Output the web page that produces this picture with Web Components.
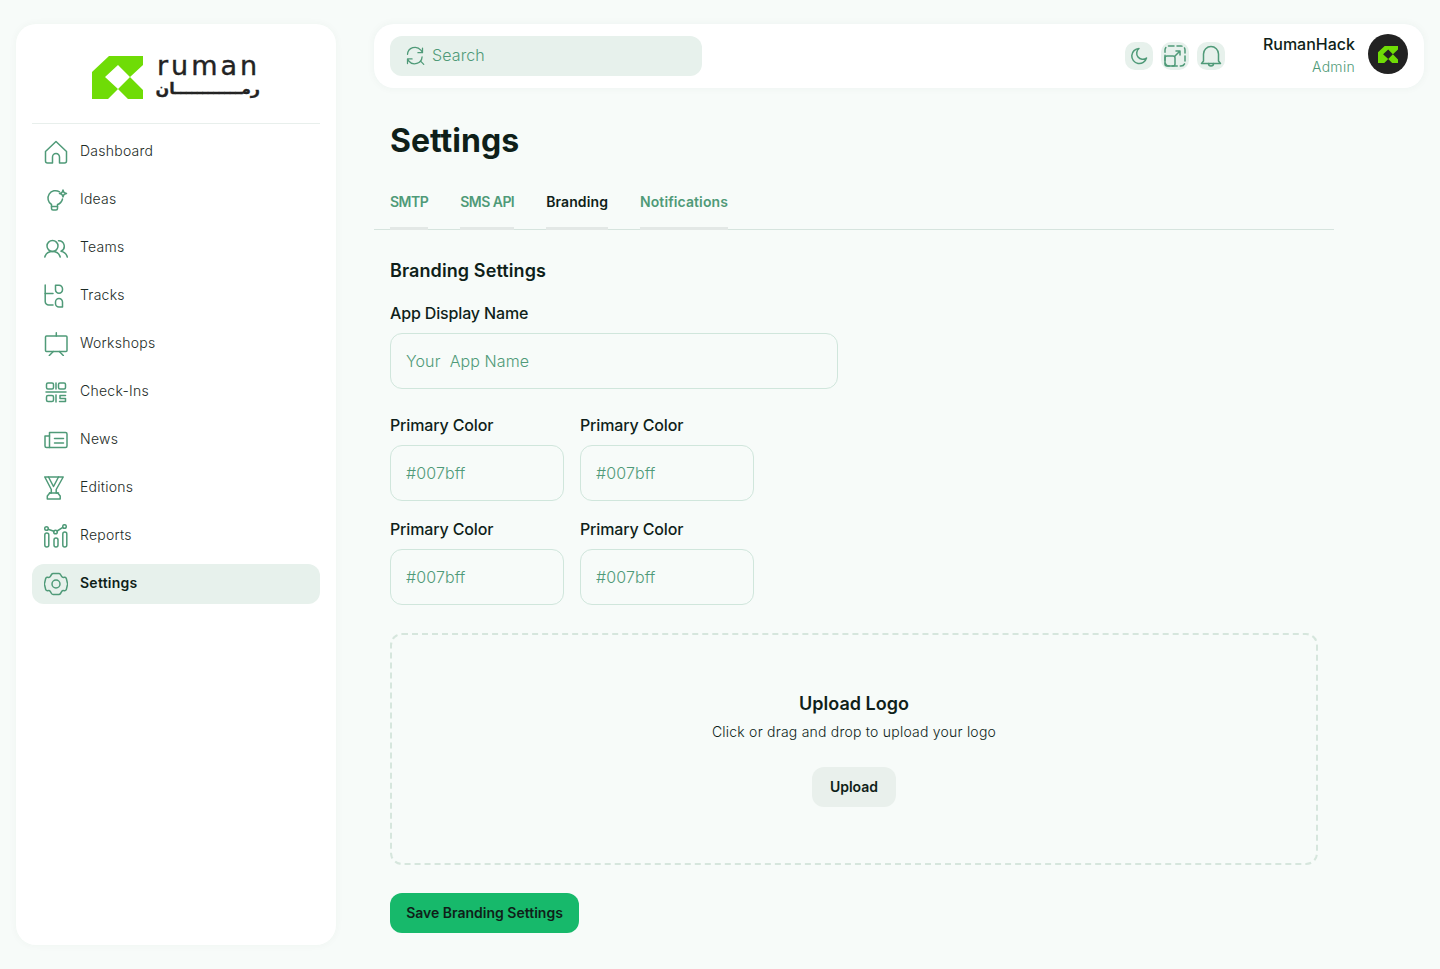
<!DOCTYPE html>
<html lang="en">
<head>
<meta charset="utf-8">
<title>Settings</title>
<style>
  html, body { margin: 0; height: 100%; }
  body { background: #f7fbf9; font-family: Inter, "Noto Sans", sans-serif; color: #0f1f19; }
</style>
</head>
<body>
<app-shell>
  <side-bar slot="side">
    <nav-item icon="home">Dashboard</nav-item>
    <nav-item icon="idea">Ideas</nav-item>
    <nav-item icon="teams">Teams</nav-item>
    <nav-item icon="tracks">Tracks</nav-item>
    <nav-item icon="board">Workshops</nav-item>
    <nav-item icon="qr">Check-Ins</nav-item>
    <nav-item icon="news">News</nav-item>
    <nav-item icon="cup">Editions</nav-item>
    <nav-item icon="chart">Reports</nav-item>
    <nav-item icon="gear" active>Settings</nav-item>
  </side-bar>
  <top-bar slot="top"></top-bar>
  <settings-page></settings-page>
</app-shell>

<script>
// iconos de la barra lateral y de la barra superior, todos en viewBox de 24
const ICONS = {
  home: '<path d="M1.500 11.500 12 1.500l10.500 10v9.500a2 2 0 0 1-2 2h-5v-6a3.500 3.500 0 0 0-7 0v6h-5a2 2 0 0 1-2-2z"/>',
  idea: '<g transform="translate(2.500 .5)"><path d="M13 3.300A7.500 7.500 0 1 0 5 16V20a1.500 1.500 0 0 0 1.500 1.500h3a1.500 1.500 0 0 0 1.500-1.500v-4A7.500 7.500 0 0 0 16 10.500"/><path d="M5 18h6"/><path d="M16.500 1.500c.3 2.500 1 3.200 3.500 3.500-2.500.3-3.200 1-3.500 3.500-.3-2.500-1-3.200-3.500-3.500 2.500-.3 3.200-1 3.500-3.500z"/></g>',
  teams: '<circle cx="8.500" cy="10" r="5.500"/><path d="M.8 21c1-3.500 4-5.500 7.700-5.500s6.700 2 7.700 5.500"/><path d="M14.500 4.700a5.500 5.500 0 0 1 2.500 10.500c3 .6 5.500 2.700 6.300 5.800"/>',
  tracks: '<path d="M1.200 1v16.500a3.500 3.500 0 0 0 3.500 3.500H9"/><path d="M1.200 9.500H9"/><path d="M11.500 1.200h3.500a3.500 3.500 0 0 1 3.500 3.500v1a3.500 3.500 0 0 1-3.500 3.500 3.500 3.500 0 0 1-3.500-3.500z"/><path d="M15 14.500a3.500 3.500 0 0 1 3.500 3.500v5h-3.500a3.500 3.500 0 0 1-3.500-3.500V18a3.500 3.500 0 0 1 3.500-3.500z"/>',
  board: '<rect x="1.500" y="4" width="21.500" height="15.500" rx="1"/><path d="M12.300 .8v3.200M9.300 19.500l-4 4M15.300 19.500l4 4"/>',
  qr: '<rect x="2.500" y="3" width="7" height="6" rx="1.500"/><rect x="14.500" y="3" width="7" height="6" rx="1.500"/><path d="M12 3v6"/><path d="M2 12h20"/><rect x="2.500" y="15.500" width="7" height="6" rx="1.500"/><path d="M12 15v7"/><path d="M21.500 15.500h-5.500v3h5.500v3h-6"/>',
  news: '<path d="M5.500 4.500H21.500a1.500 1.500 0 0 1 1.500 1.500v12a1.500 1.500 0 0 1-1.500 1.500H2.500A1.500 1.500 0 0 1 1 18V8h4.500z"/><path d="M5.500 8v11.500"/><path d="M10.500 10.500h9M10.500 15h9"/>',
  cup: '<path d="M.8 1h18.400l-7 12.500v3.500h1.500l2.500 3v3H3.300v-3l2.500-3h1.500v-3.500z"/><path d="M4.500 1l5 9.500 5-9.500"/><path d="M5.500 17h9"/>',
  chart: '<rect x=".8" y="9" width="4" height="14" rx="2"/><rect x="10" y="14" width="4" height="9" rx="2"/><rect x="18.800" y="8" width="4" height="15" rx="2"/><circle cx="2.500" cy="4.500" r="1.800"/><circle cx="11.500" cy="8" r="1.800"/><circle cx="20.500" cy="2.500" r="1.800"/><path d="M4.200 5.200l5.600 2.100M13.200 7l5.600-3.600"/>',
  gear: '<circle cx="12" cy="12" r="4"/><path d="M9.200 1.500H14.800a2 2 0 0 1 1.700 1L17.600 4.400a2 2 0 0 0 1.800 1L20.400 5.300a2 2 0 0 1 1.900 1L23.400 11a2 2 0 0 1 0 2L22.300 17.700a2 2 0 0 1-1.900 1L19.400 18.600a2 2 0 0 0-1.800 1L16.500 21.500a2 2 0 0 1-1.700 1H9.200a2 2 0 0 1-1.700-1L6.400 19.600a2 2 0 0 0-1.800-1L3.600 18.700a2 2 0 0 1-1.900-1L.6 13a2 2 0 0 1 0-2L1.700 6.300a2 2 0 0 1 1.900-1L4.600 5.400a2 2 0 0 0 1.800-1L7.500 2.500a2 2 0 0 1 1.700-1z"/>',
  search: '<path d="M3 10a9 9 0 0 1 16-5l2 2.500M21 2.500V8h-5.500"/><path d="M20.500 13a9 9 0 0 1-16 5L3 15.500M3 21v-5.500h5.500"/><path d="M19 18.500l3.500 3.500"/>',
  moon: '<path d="M12 4.500a7.500 7.500 0 1 0 7.500 9.500 6 6 0 0 1-7.500-9.500z"/>',
  expand: '<rect x="2" y="2" width="20" height="20" rx="4" stroke-dasharray="5 3"/><rect x="2" y="12" width="10" height="10" rx="2"/><path d="M12 12l5-5M13 7h4v4"/>',
  bell: '<path d="M4.500 17V10a7.500 7.500 0 0 1 15 0v7l2 2.500H2.500z"/><path d="M9.500 19.500a2.500 2.500 0 0 0 5 0"/>'
};

function icon(name, size) {
  return `<svg width="${size}" height="${size}" viewBox="0 0 24 24" fill="none" stroke="currentColor" stroke-width="1.500" stroke-linecap="round" stroke-linejoin="round">${ICONS[name]}</svg>`;
}

// marca del logo, se usa en la barra lateral y en el avatar
const MARK = '<path fill="#6fdc06" fill-rule="evenodd" d="M0 16 17 0H51V9L38 21 51 34V43H36L26 33 16 43H0ZM13 21 26 9 38 21 26 33Z"/>';

class AppShell extends HTMLElement {
  constructor() {
    super();
    this.attachShadow({ mode: 'open' });
    this.shadowRoot.innerHTML = `
    <style>
      :host { display: grid; grid-template-columns: 320px 1050px; column-gap: 38px; padding: 24px 16px; height: 969px; box-sizing: border-box; }
      .main { display: flex; flex-direction: column; min-width: 0; }
    </style>
    <slot name="side"></slot>
    <div class="main">
      <slot name="top"></slot>
      <slot></slot>
    </div>`;
  }
}

class SideBar extends HTMLElement {
  constructor() {
    super();
    this.attachShadow({ mode: 'open' });
    this.shadowRoot.innerHTML = `
    <style>
      :host { display: block; background: #fff; border-radius: 20px; padding: 0 16px; box-shadow: 0 0 8px rgba(30,80,60,.04); }
      .logo { height: 100px; box-sizing: border-box; border-bottom: 1px solid #e8efec; display: flex; align-items: center; justify-content: center; gap: 14px; padding-top: 7px; }
      .words { display: flex; flex-direction: column; width: 103px; color: #232323; }
      .en { font: 400 27px/20px "DejaVu Sans", sans-serif; letter-spacing: 3px; height: 21px; white-space: nowrap; -webkit-text-stroke: .4px #232323; }
      .ar { font: 700 16px/20px "DejaVu Sans", sans-serif; height: 20px; margin-top: 2px; text-align: center; white-space: nowrap; -webkit-text-stroke: .3px #232323; }
      nav { display: flex; flex-direction: column; gap: 8px; padding-top: 8px; }
    </style>
    <div class="logo">
      <svg width="51" height="43" viewBox="0 0 51 43">${MARK}</svg>
      <div class="words"><span class="en">ruman</span><span class="ar" dir="rtl">رمــــــــــــان</span></div>
    </div>
    <nav><slot></slot></nav>`;
  }
}

class NavItem extends HTMLElement {
  constructor() {
    super();
    this.attachShadow({ mode: 'open' });
  }
  connectedCallback() {
    this.shadowRoot.innerHTML = `
    <style>
      :host { display: flex; align-items: center; gap: 12px; height: 40px; padding: 0 12px; border-radius: 12px; font-size: 14px; font-weight: 300; letter-spacing: .25px; color: #1c2b26; }
      :host([active]) { background: #e7f1ec; font-weight: 600; color: #0f1f19; }
      svg { color: #4f9a78; flex: none; }
      span { margin-bottom: 3px; }
    </style>
    ${icon(this.getAttribute('icon'), 24)}<span><slot></slot></span>`;
  }
}

class IconButton extends HTMLElement {
  constructor() {
    super();
    this.attachShadow({ mode: 'open' });
  }
  connectedCallback() {
    this.shadowRoot.innerHTML = `
    <style>
      :host { display: flex; align-items: center; justify-content: center; width: 28px; height: 28px; border-radius: 10px; background: #e7f1ec; color: #4f9a78; }
    </style>
    ${icon(this.getAttribute('icon'), 24)}`;
  }
}

class TopBar extends HTMLElement {
  constructor() {
    super();
    this.attachShadow({ mode: 'open' });
    this.shadowRoot.innerHTML = `
    <style>
      :host { display: flex; align-items: center; height: 64px; background: #fff; border-radius: 20px; padding: 0 16px; box-sizing: border-box; box-shadow: 0 0 8px rgba(30,80,60,.05); }
      .search { display: flex; align-items: center; gap: 7px; width: 312px; height: 40px; box-sizing: border-box; padding: 0 15px; border-radius: 12px; background: #e7f1ec; color: #4f9a78; font-size: 16px; font-weight: 300; letter-spacing: .1px; }
      .search span { margin-bottom: 2px; }
      .actions { margin-left: auto; display: flex; gap: 8px; }
      .user { margin-left: 38px; text-align: right; margin-right: 13px; margin-top: -2px; }
      .name { font-size: 16px; font-weight: 500; line-height: 20px; color: #0f1f19; }
      .role { font-size: 14px; font-weight: 300; line-height: 20px; margin-top: 3px; color: #4f9a78; letter-spacing: .3px; }
      .avatar { width: 40px; height: 40px; border-radius: 50%; background: #222; display: flex; align-items: center; justify-content: center; margin-bottom: 4px; }
    </style>
    <div class="search">${icon('search', 20)}<span>Search</span></div>
    <div class="actions">
      <icon-button icon="moon"></icon-button>
      <icon-button icon="expand"></icon-button>
      <icon-button icon="bell"></icon-button>
    </div>
    <div class="user"><div class="name">RumanHack</div><div class="role">Admin</div></div>
    <div class="avatar"><svg width="20" height="17" viewBox="0 0 51 43">${MARK}</svg></div>`;
  }
}

class TabBar extends HTMLElement {
  constructor() {
    super();
    this.attachShadow({ mode: 'open' });
    // el espaciado va por pestaña para que cada una mida lo mismo que en el diseño
    const tabs = [['SMTP', -.5], ['SMS API', -.55], ['Branding', .1], ['Notifications', .1]];
    const selected = this.getAttribute('selected');
    this.shadowRoot.innerHTML = `
    <style>
      :host { display: flex; gap: 32px; padding: 0 16px; width: 960px; box-sizing: border-box; border-bottom: 1px solid #d6e4de; }
      .tab { height: 36px; box-sizing: border-box; border-bottom: 3px solid #e3e8e6; margin-bottom: -1px; font-size: 14px; font-weight: 600; line-height: 15px; color: #4f9a78; }
      .on { color: #0f1f19; }
    </style>
    ${tabs.map(([t, s]) => `<div class="tab ${t === selected ? 'on' : ''}" style="letter-spacing:${s}px">${t}</div>`).join('')}`;
  }
}

class FormField extends HTMLElement {
  constructor() {
    super();
    this.attachShadow({ mode: 'open' });
  }
  connectedCallback() {
    this.shadowRoot.innerHTML = `
    <style>
      :host { display: block; width: var(--w, 174px); }
      label { display: block; font-size: 16px; font-weight: 500; line-height: 24px; letter-spacing: -.15px; color: #0f1f19; margin-bottom: 8px; }
      input { display: block; width: 100%; height: 56px; box-sizing: border-box; padding: 0 15px; border: 1px solid #d0e6dc; border-radius: 12px; background: #f7fbf9; font: 300 16px Inter, sans-serif; letter-spacing: .1px; color: #4f9a78; outline: 0; }
      input::placeholder { color: #4f9a78; opacity: 1; }
    </style>
    <label>${this.getAttribute('label')}</label>
    <input placeholder="${this.getAttribute('placeholder')}">`;
  }
}

class UploadBox extends HTMLElement {
  constructor() {
    super();
    this.attachShadow({ mode: 'open' });
    this.shadowRoot.innerHTML = `
    <style>
      :host { display: flex; flex-direction: column; align-items: center; width: 928px; height: 232px; box-sizing: border-box; padding-top: 57px; border: 2px dashed #d6e6dd; border-radius: 12px; }
      h3 { margin: 0; font-size: 18px; font-weight: 600; line-height: 24px; color: #0f1f19; }
      p { margin: 4px 0 0; font-size: 14px; font-weight: 300; line-height: 24px; letter-spacing: .22px; color: #0f1f19; }
      .btn { margin-top: 23px; width: 84px; height: 40px; display: flex; align-items: center; justify-content: center; border-radius: 12px; background: #e9f0ec; font-size: 14px; font-weight: 600; color: #0f1f19; }
      .btn span { margin-bottom: 2px; }
    </style>
    <h3>Upload Logo</h3>
    <p>Click or drag and drop to upload your logo</p>
    <div class="btn"><span>Upload</span></div>`;
  }
}

class SettingsPage extends HTMLElement {
  constructor() {
    super();
    this.attachShadow({ mode: 'open' });
    this.shadowRoot.innerHTML = `
    <style>
      :host { display: block; }
      h1 { margin: 0; padding: 33px 16px 0; font-size: 32px; font-weight: 700; line-height: 40px; color: #0f1f19; }
      tab-bar { margin-top: 33px; }
      .form { padding: 0 16px; display: flex; flex-direction: column; }
      h2 { margin: 29px 0 0; font-size: 18px; font-weight: 600; line-height: 24px; letter-spacing: .1px; color: #0f1f19; }
      .first { margin-top: 18px; --w: 448px; }
      .grid { display: grid; grid-template-columns: 174px 174px; gap: 16px; margin-top: 24px; }
      .grid form-field { height: 88px; }
      upload-box { margin-top: 28px; }
      .save { margin-top: 28px; width: 189px; height: 40px; display: flex; align-items: center; justify-content: center; border-radius: 12px; background: #17b96b; font-size: 14px; font-weight: 600; color: #0f1f19; }
      .save span { margin-bottom: 2px; }
    </style>
    <h1>Settings</h1>
    <tab-bar selected="Branding"></tab-bar>
    <div class="form">
      <h2>Branding Settings</h2>
      <form-field class="first" label="App Display Name" placeholder="Your  App Name"></form-field>
      <div class="grid">
        <form-field label="Primary Color" placeholder="#007bff"></form-field>
        <form-field label="Primary Color" placeholder="#007bff"></form-field>
        <form-field label="Primary Color" placeholder="#007bff"></form-field>
        <form-field label="Primary Color" placeholder="#007bff"></form-field>
      </div>
      <upload-box></upload-box>
      <div class="save"><span>Save Branding Settings</span></div>
    </div>`;
  }
}

customElements.define('app-shell', AppShell);
customElements.define('side-bar', SideBar);
customElements.define('nav-item', NavItem);
customElements.define('icon-button', IconButton);
customElements.define('top-bar', TopBar);
customElements.define('tab-bar', TabBar);
customElements.define('form-field', FormField);
customElements.define('upload-box', UploadBox);
customElements.define('settings-page', SettingsPage);
</script>
</body>
</html>
